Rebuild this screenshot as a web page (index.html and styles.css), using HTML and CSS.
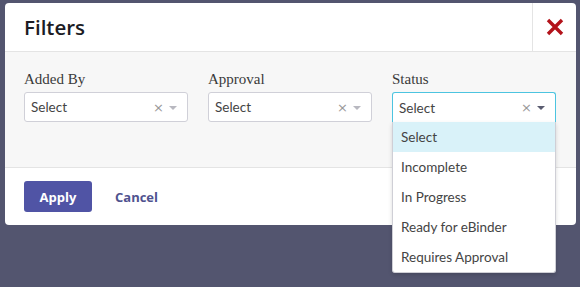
FILE: index.html
```html
<!DOCTYPE html>
<html lang="en">
<head>
    <meta charset="UTF-8">
    <title>Filters</title>
    <link rel="stylesheet" href="styles.css">
</head>
<body>

<div class="modal">
    <!-- header -->
    <div class="modal-header">
        <h1>Filters</h1>
        <button class="close-btn" aria-label="Close">
            <svg width="18" height="18" viewBox="0 0 18 18">
                <path d="M2 2 L16 16 M16 2 L2 16" stroke="#b3131b" stroke-width="3.4" stroke-linecap="butt"/>
            </svg>
        </button>
    </div>

    <!-- filters -->
    <div class="modal-body">
        <div class="field">
            <label>Added By</label>
            <div class="select">
                <span class="value">Select</span>
                <span class="clear">&times;</span>
                <span class="caret"></span>
            </div>
        </div>
        <div class="field">
            <label>Approval</label>
            <div class="select">
                <span class="value">Select</span>
                <span class="clear">&times;</span>
                <span class="caret"></span>
            </div>
        </div>
        <div class="field">
            <label>Status</label>
            <div class="select open">
                <span class="value">Select</span>
                <span class="clear">&times;</span>
                <span class="caret"></span>
                <ul class="menu">
                    <li class="active">Select</li>
                    <li>Incomplete</li>
                    <li>In Progress</li>
                    <li>Ready for eBinder</li>
                    <li>Requires Approval</li>
                </ul>
            </div>
        </div>
    </div>

    <!-- footer -->
    <div class="modal-footer">
        <button class="btn-apply">Apply</button>
        <button class="btn-cancel">Cancel</button>
    </div>
</div>

</body>
</html>
```

FILE: styles.css
```css
/* ===== Page ===== */
body {
    margin: 0;
    padding: 3px 4px 0 5px;
    height: 287px;
    box-sizing: border-box;
    background: #53556f;
    font-family: 'Lato', sans-serif;
    overflow: hidden;
}

/* ===== Modal ===== */
.modal {
    width: 571px;
    background: #fff;
    border-radius: 4px;
}

.modal-header {
    display: flex;
    height: 48px;
    border-bottom: 1px solid #e4e4e4;
}

.modal-header h1 {
    flex: 1;
    margin: 0;
    padding-left: 19px;
    font-family: 'Open Sans', sans-serif;
    font-size: 20.5px;
    font-weight: 600;
    line-height: 48px;
    color: #1c1c24;
}

.close-btn {
    width: 44px;
    border: none;
    border-left: 1px solid #e4e4e4;
    background: transparent;
    display: flex;
    align-items: center;
    justify-content: center;
    padding: 0;
}

.modal-body {
    display: flex;
    gap: 20px;
    height: 116px;
    padding: 18px 19px 0;
    box-sizing: border-box;
    background: #f7f7f7;
    border-bottom: 1px solid #e4e4e4;
}

.field {
    width: 164px;
}

.field label {
    display: block;
    height: 22px;
    font-family: 'Liberation Serif', serif;
    font-size: 15px;
    line-height: 18px;
    color: #3a3a3a;
}

/* ===== Select ===== */
.select {
    position: relative;
    display: flex;
    align-items: center;
    height: 30px;
    padding: 0 10px 0 6px;
    box-sizing: border-box;
    background: #fff;
    border: 1px solid #d0d0d8;
    border-radius: 3px;
}

.select .value {
    flex: 1;
    font-size: 13.5px;
    color: #444;
}

.select .clear {
    font-family: 'DejaVu Sans', sans-serif;
    font-size: 13px;
    color: #999;
    margin-right: 5px;
}

.select .caret {
    width: 0;
    height: 0;
    border-left: 4px solid transparent;
    border-right: 4px solid transparent;
    border-top: 4px solid #b8b8c0;
    margin-top: 1px;
}

.select.open {
    border-color: #4cc4e0;
    border-bottom: none;
    border-radius: 3px 3px 0 0;
}

.select.open .caret {
    border-top-color: #5a5c70;
}

.menu {
    position: absolute;
    top: 29px;
    left: -1px;
    right: -1px;
    margin: 0;
    padding: 0;
    list-style: none;
    background: #fff;
    border: 1px solid #cfcfd6;
    border-top: none;
    border-radius: 0 0 3px 3px;
    box-shadow: 0 2px 4px rgba(0, 0, 0, 0.15);
    z-index: 10;
}

.menu li {
    height: 30px;
    line-height: 30px;
    padding-left: 8px;
    font-size: 13.5px;
    color: #444;
}

.menu li.active {
    background: #d9f2f9;
}

/* ===== Footer ===== */
.modal-footer {
    display: flex;
    align-items: center;
    height: 57px;
    padding-left: 19px;
}

.btn-apply,
.btn-cancel {
    font-family: 'Open Sans', sans-serif;
    font-size: 13px;
    font-weight: 700;
    border: none;
    cursor: pointer;
}

.btn-apply {
    width: 68px;
    height: 31px;
    background: #5054a5;
    color: #fff;
    border-radius: 3px;
}

.btn-cancel {
    margin-left: 17px;
    background: transparent;
    color: #4f538f;
}
```
